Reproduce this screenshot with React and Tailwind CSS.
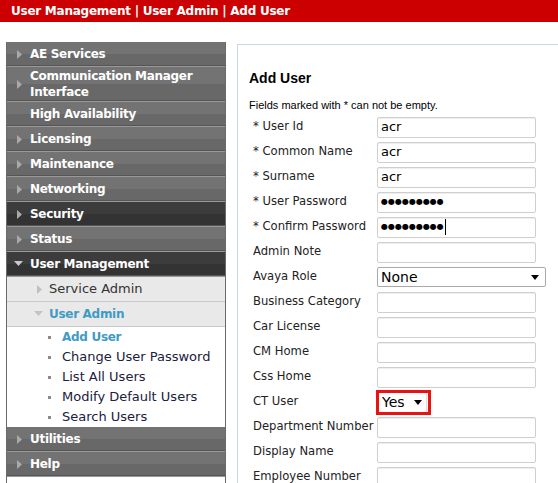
import React from "react";

const V = { fontFamily: '"DejaVu Sans", Verdana, sans-serif' };
const A = { fontFamily: '"Liberation Sans", Arial, sans-serif' };

function RightArrow({ color = "#a9a9a9" }) {
  return (
    <svg width="6" height="9" viewBox="0 0 6 9" className="shrink-0">
      <path d="M0 0 L5 4.5 L0 9 Z" fill={color} />
    </svg>
  );
}
function DownArrow({ color = "#b8b8b8" }) {
  return (
    <svg width="9" height="6" viewBox="0 0 9 6" className="shrink-0">
      <path d="M0 0 L9 0 L4.5 5 Z" fill={color} />
    </svg>
  );
}

function MenuRow({ label, arrow = "right", dark = false }) {
  const bg = dark
    ? "bg-[linear-gradient(#3c3c3c_50%,#333333_50%)]"
    : "bg-[linear-gradient(#737373_50%,#686868_50%)]";
  return (
    <div
      className={`flex items-center h-[25px] ${bg} border-b border-b-[#999999] shadow-[inset_0_-1px_0_#555]`}
    >
      <div className="w-[23px] flex justify-end pr-[7px]">
        {arrow === "right" && <RightArrow />}
        {arrow === "down" && <DownArrow color="#c8c8c8" />}
      </div>
      <span className="text-white font-bold text-[12px] tracking-[-0.3px] leading-[14px] whitespace-nowrap" style={V}>
        {label}
      </span>
    </div>
  );
}

function SubRow({ label, active, open }) {
  return (
    <div className="flex items-center h-[25px] bg-[#e9e9e9] border-b border-b-[#c9c9c9]">
      <div className="w-[42px] flex justify-end pr-[6px]">
        {open ? <DownArrow color="#c4c4c4" /> : <RightArrow color="#c0c0c0" />}
      </div>
      <span
        className={`whitespace-nowrap ${active ? "font-bold text-[12px] tracking-[-0.3px] text-[#3f9bc4]" : "text-[13px] text-[#333333]"}`}
        style={V}
      >
        {label}
      </span>
    </div>
  );
}

function LeafRow({ label, active }) {
  return (
    <div className="flex items-center h-[20px] bg-white">
      <div className="w-[55px] flex justify-end pr-[6px]">
        <div className="w-[3px] h-[3px] bg-[#8a8a8a] mr-[5px]" />
      </div>
      <span
        className={`whitespace-nowrap ${active ? "font-bold text-[12px] tracking-[-0.3px] text-[#3f9bc4]" : "text-[13px] text-[#202040]"}`}
        style={V}
      >
        {label}
      </span>
    </div>
  );
}

function Label({ children, w = "w-[128px]" }) {
  return (
    <div className={`${w} shrink-0 text-[11.6px] text-[#222] pl-[4px] whitespace-nowrap`} style={V}>
      {children}
    </div>
  );
}

function Field({ label, value, password, caret }) {
  return (
    <div className="flex items-center h-[25px]">
      <Label>{label}</Label>
      <div className="w-[159px] h-[21px] border border-[#cfcfcf] rounded-[2px] bg-white flex items-center px-[3px] shadow-[inset_0_1px_0_#eee]">
        {password ? (
          <span className="text-[8px] text-black leading-none flex items-center whitespace-nowrap" style={V}>
            ●●●●●●●●●
            {caret && <span className="inline-block w-[1px] h-[16px] bg-black ml-[1px]" />}
          </span>
        ) : (
          <span className="text-[13px] text-black" style={V}>
            {value}
          </span>
        )}
      </div>
    </div>
  );
}

export default function App() {
  return (
    <div className="w-[558px] h-[483px] bg-white overflow-hidden relative">
      <div className="h-[22px] bg-[#cc0000] flex items-center pl-[11px]">
        <span className="text-white font-bold text-[12px] tracking-[-0.25px]" style={V}>
          User Management | User Admin | Add User
        </span>
      </div>
      <div className="flex pt-[20px] pl-[6px]">
        <div className="w-[220px] shrink-0 border-x border-[#6a6a6a]">
          <MenuRow label="AE Services" />
          <div className="flex items-center h-[35px] bg-[linear-gradient(#737373_50%,#686868_50%)] border-b border-b-[#999999] shadow-[inset_0_-1px_0_#555]">
            <div className="w-[23px] flex justify-end pr-[7px]">
              <RightArrow />
            </div>
            <span className="text-white font-bold text-[12px] tracking-[-0.3px] leading-[16px]" style={V}>
              Communication Manager
              <br />
              Interface
            </span>
          </div>
          <MenuRow label="High Availability" arrow="none" />
          <MenuRow label="Licensing" />
          <MenuRow label="Maintenance" />
          <MenuRow label="Networking" />
          <MenuRow label="Security" dark />
          <MenuRow label="Status" />
          <MenuRow label="User Management" arrow="down" dark />
          <SubRow label="Service Admin" />
          <SubRow label="User Admin" active open />
          <LeafRow label="Add User" active />
          <LeafRow label="Change User Password" />
          <LeafRow label="List All Users" />
          <LeafRow label="Modify Default Users" />
          <LeafRow label="Search Users" />
          <MenuRow label="Utilities" />
          <MenuRow label="Help" />
        </div>
        <div className="ml-[11px] mt-[2px] flex-1 border-l border-t border-[#c6d8ee] h-[460px] pl-[11px] pt-[23px]">
          <div className="font-bold text-[14px] text-black" style={A}>
            Add User
          </div>
          <div className="mt-[8px] text-[11px] text-black" style={A}>
            Fields marked with * can not be empty.
          </div>
          <div className="mt-[1px]">
            <Field label="* User Id" value="acr" />
            <Field label="* Common Name" value="acr" />
            <Field label="* Surname" value="acr" />
            <Field label="* User Password" password />
            <Field label="* Confirm Password" password caret />
            <Field label="Admin Note" value="" />
            <div className="flex items-center h-[25px]">
              <Label>Avaya Role</Label>
              <div className="w-[169px] h-[20px] border border-[#a9a9a9] rounded-[2px] bg-white flex items-center justify-between pl-[3px] pr-[6px]">
                <span className="text-[14px] text-black" style={V}>None</span>
                <svg width="8" height="5" viewBox="0 0 8 5"><path d="M0 0 L8 0 L4 5 Z" fill="#000" /></svg>
              </div>
            </div>
            <Field label="Business Category" value="" />
            <Field label="Car License" value="" />
            <Field label="CM Home" value="" />
            <Field label="Css Home" value="" />
            <div className="flex items-center h-[25px]">
              <Label w="w-[127px]">CT User</Label>
              <div className="w-[55px] h-[25px] border-[3px] border-[#ee1111] flex items-center">
                <div className="flex items-center gap-[9px] pl-[3px] h-[19px] pr-[4px] border-r border-[#ddd]">
                  <span className="text-[14px] text-black" style={V}>Yes</span>
                  <svg width="8" height="5" viewBox="0 0 8 5"><path d="M0 0 L8 0 L4 5 Z" fill="#000" /></svg>
                </div>
              </div>
            </div>
            <Field label="Department Number" value="" />
            <Field label="Display Name" value="" />
            <Field label="Employee Number" value="" />
          </div>
        </div>
      </div>
    </div>
  );
}
